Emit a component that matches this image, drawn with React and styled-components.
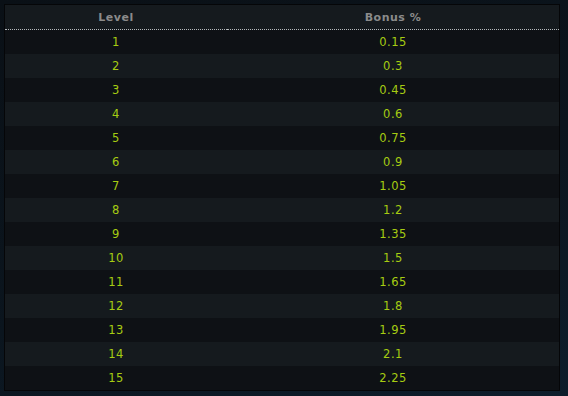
import styled, { createGlobalStyle } from 'styled-components';

const GlobalStyle = createGlobalStyle`
  html, body {
    margin: 0;
    padding: 0;
    background: #0a1118;
  }
  body {
    width: 568px;
    height: 396px;
    overflow: hidden;
    background: linear-gradient(160deg, #0a1016 0%, #0b151e 55%, #0d1d2b 100%);
    font-family: "DejaVu Sans", Verdana, sans-serif;
  }
`;

const Page = styled.div`
  padding: 4px 0 0 4px;
`;

const Panel = styled.table`
  width: 556px;
  border-collapse: collapse;
  border: 1px solid #050608;
  table-layout: fixed;
`;

const HeadCell = styled.th`
  width: ${p => p.$w}px;
  height: 24px;
  padding: 0;
  background: #151a1e;
  border-bottom: 1px dotted #b4b8bb;
  color: #8b8b8b;
  font-size: 11px;
  font-weight: bold;
  letter-spacing: 0.5px;
  text-align: center;
  vertical-align: middle;
`;

const Row = styled.tr`
  background: ${p => (p.$odd ? '#0e1115' : '#151a1e')};
`;

const Cell = styled.td`
  height: 24px;
  padding: 0;
  color: #a6cc12;
  font-size: 11.5px;
  text-align: center;
  vertical-align: middle;
  letter-spacing: 0.5px;
`;

const rows = Array.from({ length: 15 }, (_, i) => ({
  level: i + 1,
  bonus: +((i + 1) * 0.15).toFixed(2),
}));

export default function App() {
  return (
    <>
      <GlobalStyle />
      <Page>
        <Panel>
          <thead>
            <tr>
              <HeadCell $w={222}>Level</HeadCell>
              <HeadCell $w={332}>Bonus %</HeadCell>
            </tr>
          </thead>
          <tbody>
            {rows.map((r, i) => (
              <Row key={r.level} $odd={i % 2 === 0}>
                <Cell>{r.level}</Cell>
                <Cell>{String(r.bonus)}</Cell>
              </Row>
            ))}
          </tbody>
        </Panel>
      </Page>
    </>
  );
}
